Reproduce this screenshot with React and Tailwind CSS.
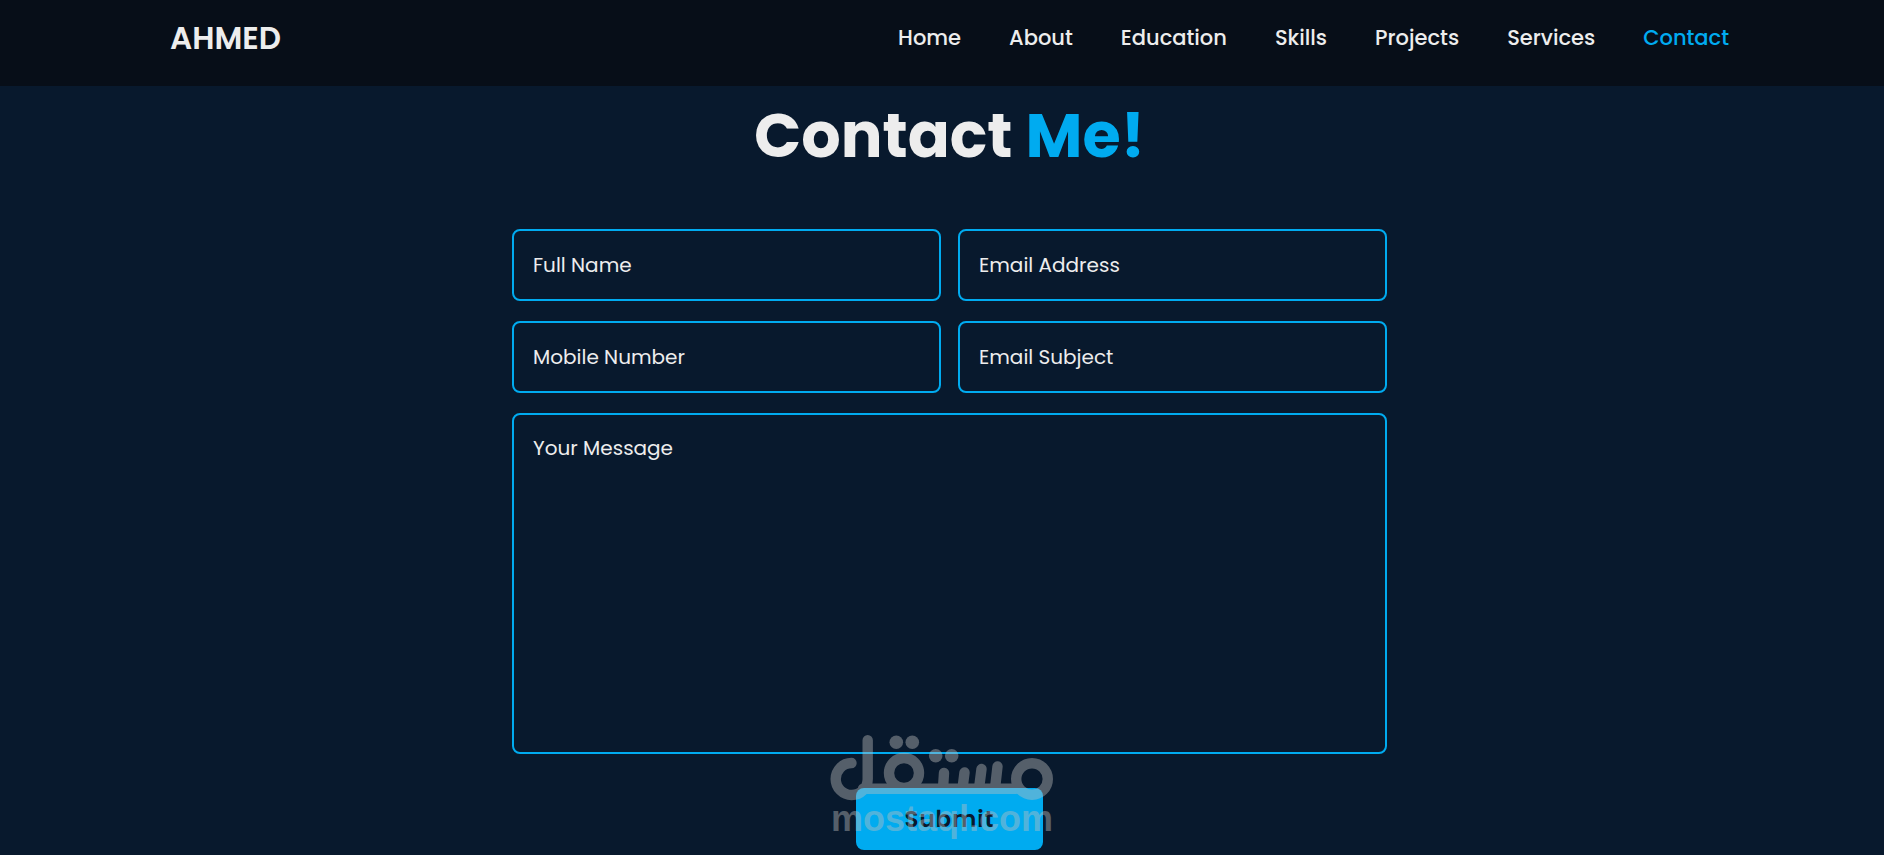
import { useState } from "react"

const navLinks = ["Home", "About", "Education", "Skills", "Projects", "Services", "Contact"]

const fields = [
  { id: "name", type: "text", label: "Full Name" },
  { id: "email", type: "email", label: "Email Address" },
  { id: "mobile", type: "tel", label: "Mobile Number" },
  { id: "subject", type: "text", label: "Email Subject" },
]

const fieldClass =
  "w-full rounded-lg border-2 border-[#00abf0] bg-transparent px-[19px] text-xl text-[#ededed] placeholder-[#ededed] outline-none"

function Watermark() {
  return (
    <div className="pointer-events-none absolute bottom-[18px] left-1/2 w-56 -translate-x-1/2 opacity-[0.42]">
      <svg viewBox="0 0 224 66" className="block w-full" fill="none" stroke="#bfbfbf" strokeWidth="10.4" strokeLinecap="round">
        {/* lam and baseline */}
        <path d="M21.500 28A16 16 0 1 0 37.700 44V5.300M33 53.700H186" />
        {/* teeth */}
        <path d="M113 53.700L114 38M132.500 53.700L134.500 37.500M149 53.700L151.500 34M165 53.700L167.500 31.500" />
        {/* qaf and meem */}
        <circle cx="74" cy="38" r="15" />
        <circle cx="202" cy="44" r="15.800" />
        <g fill="#bfbfbf" stroke="none">
          <circle cx="66.300" cy="7.300" r="6.800" />
          <circle cx="82.300" cy="7.300" r="6.800" />
          <circle cx="105.700" cy="20.700" r="6.800" />
          <circle cx="121.700" cy="20.700" r="6.800" />
        </g>
      </svg>
      <p className="text-center font-['Liberation_Sans',sans-serif] text-4xl leading-9 font-bold text-[#bfbfbf]">
        mostaql.com
      </p>
    </div>
  )
}

export default function App() {
  const [active, setActive] = useState("Contact")

  return (
    <div className="relative min-h-screen bg-[#08192d] font-[Poppins,Inter,sans-serif] text-[#ededed]">
      <header className="flex h-[86px] items-start justify-between bg-[#070e18] pt-[14px] pr-[155px] pl-[170px]">
        <a href="#home" className="text-[31px] leading-[48px] font-semibold">
          AHMED
        </a>
        <nav className="flex gap-12 text-[21px] leading-[48px] font-medium">
          {navLinks.map((link) => (
            <a
              key={link}
              href={`#${link.toLowerCase()}`}
              onClick={() => setActive(link)}
              className={active === link ? "text-[#00abf0]" : ""}
            >
              {link}
            </a>
          ))}
        </nav>
      </header>

      <main className="pl-[15px]">
        <h1 className="pt-2 text-center text-[62px] leading-[83px] font-bold">
          Contact <span className="text-[#00abf0]">Me!</span>
        </h1>

        <form
          onSubmit={(e) => e.preventDefault()}
          className="mx-auto mt-13 grid max-w-[875px] grid-cols-2 gap-x-[17px] gap-y-5"
        >
          {fields.map(({ id, type, label }) => (
            <input key={id} id={id} type={type} aria-label={label} placeholder={label} className={`${fieldClass} h-[72px]`} />
          ))}
          <textarea
            id="message"
            aria-label="Your Message"
            placeholder="Your Message"
            className={`${fieldClass} col-span-2 h-[341px] resize-none py-[19px]`}
          />
          <button
            type="submit"
            className="col-span-2 mt-[14px] mb-1 h-[62px] w-[187px] justify-self-center rounded-lg bg-[#00abf0] text-[23px] font-semibold tracking-[1px] text-[#08192d]"
          >
            Submit
          </button>
        </form>
      </main>

      <Watermark />
    </div>
  )
}
